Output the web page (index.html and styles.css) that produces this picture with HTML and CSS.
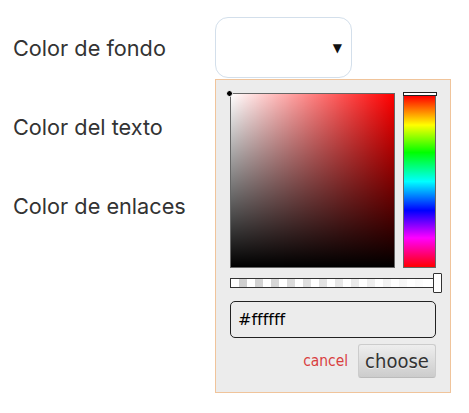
FILE: index.html
```html
<!DOCTYPE html>
<html lang="es">
<head>
<meta charset="utf-8">
<link rel="stylesheet" href="styles.css">
</head>
<body>
<div class="form">
  <div class="row">
    <label class="label">Color de fondo</label>
    <div class="select"><span class="arrow">▼</span></div>
  </div>
  <div class="row">
    <label class="label">Color del texto</label>
    <div class="select"><span class="arrow">▼</span></div>
  </div>
  <div class="row">
    <label class="label">Color de enlaces</label>
    <div class="select"><span class="arrow">▼</span></div>
  </div>

  <div class="picker">
    <div class="top">
      <div class="sat">
        <div class="sat-white"><div class="sat-black"></div></div>
        <span class="dragger"></span>
      </div>
      <div class="hue">
        <span class="hue-handle"></span>
      </div>
    </div>
    <div class="alpha">
      <div class="alpha-inner"></div>
      <span class="alpha-handle"></span>
    </div>
    <div class="input">#ffffff</div>
    <div class="buttons">
      <span class="cancel">cancel</span>
      <span class="choose">choose</span>
    </div>
  </div>
</div>
</body>
</html>
```

FILE: styles.css
```css
html, body {
  margin: 0;
  padding: 0;
  background: #fff;
}

.form {
  position: relative;
  box-sizing: border-box;
  min-height: 413px;
  padding: 17px 0 0 13px;
  display: flex;
  flex-direction: column;
  gap: 18px;
}

.row {
  display: grid;
  grid-template-columns: 202px 137px;
  align-items: center;
  height: 61px;
}

.label {
  font-family: Inter, "Noto Sans", sans-serif;
  font-size: 21.7px;
  color: #333;
}

.select {
  box-sizing: border-box;
  height: 61px;
  border: 1px solid #d3dfeb;
  border-radius: 13px;
  background: #fff;
  display: flex;
  align-items: center;
  justify-content: flex-end;
  padding-right: 9px;
}

.arrow {
  font-family: "DejaVu Sans", sans-serif;
  font-size: 12px;
  color: #111;
}

.picker {
  position: absolute;
  left: 215px;
  top: 79px;
  box-sizing: border-box;
  width: 236px;
  height: 314px;
  border: 1px solid #f0c49b;
  background: #ececec;
  padding: 13px 14px 0 14px;
  display: flex;
  flex-direction: column;
  z-index: 2;
}

.top {
  display: flex;
  gap: 8px;
  height: 175px;
}

.sat {
  position: relative;
  box-sizing: border-box;
  width: 165px;
  height: 175px;
  border: 1px solid #666;
  background: #f00;
}

.sat-white {
  width: 100%;
  height: 100%;
  background: linear-gradient(to right, #fff, rgba(255,255,255,0));
}

.sat-black {
  width: 100%;
  height: 100%;
  background: linear-gradient(to top, #000, rgba(0,0,0,0));
}

.dragger {
  position: absolute;
  left: -5px;
  top: -4px;
  width: 5px;
  height: 5px;
  border-radius: 50%;
  background: #000;
  border: 1px solid #fff;
}

.hue {
  position: relative;
  box-sizing: border-box;
  width: 33px;
  height: 173px;
  margin-top: 2px;
  border: 1px solid #666;
  background: linear-gradient(to bottom, #f00 0%, #ff0 17%, #0f0 33%, #0ff 50%, #00f 67%, #f0f 83%, #f00 100%);
}

.hue-handle {
  position: absolute;
  left: -1px;
  right: -2px;
  top: -4px;
  height: 2px;
  background: #fff;
  border: 1px solid #222;
}

.alpha {
  position: relative;
  box-sizing: border-box;
  margin-top: 10px;
  width: 206px;
  height: 10px;
  border: 1px solid #333;
  background-color: #fff;
  background-image:
    linear-gradient(45deg, #ccc 25%, transparent 25%, transparent 75%, #ccc 75%),
    linear-gradient(45deg, #ccc 25%, transparent 25%, transparent 75%, #ccc 75%);
  background-size: 16px 16px;
  background-position: 0 0, 8px 8px;
}

.alpha-inner {
  width: 100%;
  height: 100%;
  background: linear-gradient(to right, rgba(255,255,255,0), #fff);
}

.alpha-handle {
  position: absolute;
  right: -7px;
  top: -6px;
  box-sizing: border-box;
  width: 9px;
  height: 20px;
  background: #fff;
  border: 1px solid #333;
  border-radius: 1px;
}

.input {
  box-sizing: border-box;
  margin-top: 13px;
  width: 206px;
  height: 37px;
  border: 1px solid #222;
  border-radius: 5px;
  padding-left: 7px;
  display: flex;
  align-items: center;
  font-family: "DejaVu Sans", sans-serif;
  font-size: 16px;
  color: #000;
}

.buttons {
  margin-top: 6px;
  display: flex;
  justify-content: flex-end;
  align-items: center;
  gap: 10px;
}

.cancel {
  font-family: "DejaVu Sans Condensed", serif;
  font-size: 15.4px;
  color: #d93f3f;
}

.choose {
  box-sizing: border-box;
  width: 78px;
  height: 34px;
  display: flex;
  align-items: center;
  justify-content: center;
  border: 1px solid #ccc;
  border-bottom-color: #bbb;
  border-radius: 3px;
  background: linear-gradient(to bottom, #eee, #ccc);
  font-family: "DejaVu Sans Condensed", serif;
  font-size: 20px;
  color: #333;
  text-shadow: 0 1px 0 #eee;
}
```
